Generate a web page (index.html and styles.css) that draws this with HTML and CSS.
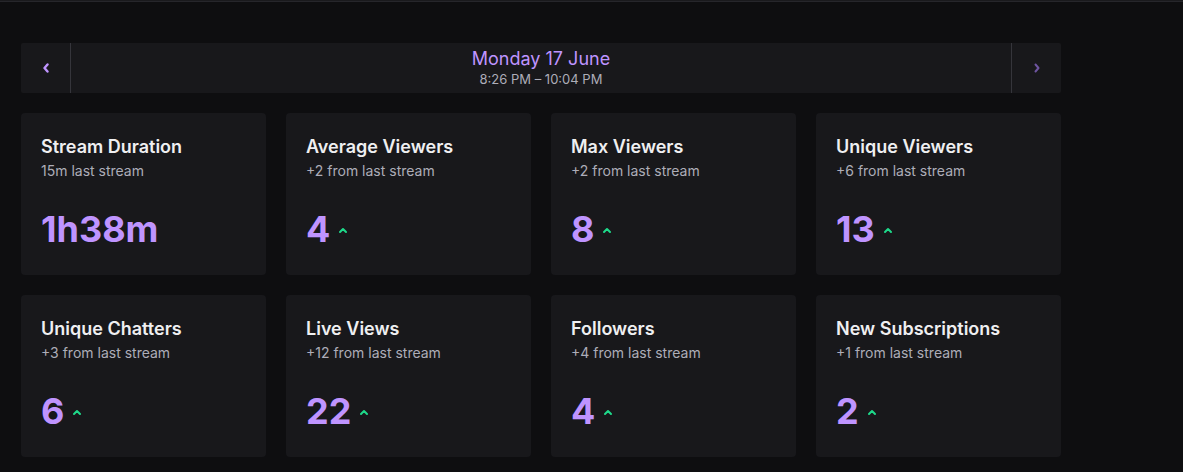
FILE: index.html
```html
<!DOCTYPE html>
<html>
<head>
<meta charset="utf-8">
<link rel="stylesheet" href="styles.css">
</head>
<body>
<div class="topline"></div>
<main class="page">
  <div class="datebar">
    <button class="navbtn navbtn-left" aria-label="Previous">
      <svg width="8" height="10" viewBox="0 0 8 10"><path d="M5.5 1.5 L2.5 5 L5.5 8.5" fill="none" stroke="#bf94ff" stroke-width="2.4" stroke-linecap="round" stroke-linejoin="round"/></svg>
    </button>
    <div class="datecenter">
      <div class="date">Monday 17 June</div>
      <div class="time">8:26 PM – 10:04 PM</div>
    </div>
    <button class="navbtn navbtn-right" aria-label="Next">
      <svg width="8" height="10" viewBox="0 0 8 10"><path d="M2.5 1.5 L5.5 5 L2.5 8.5" fill="none" stroke="#6e55a0" stroke-width="2" stroke-linecap="round" stroke-linejoin="round"/></svg>
    </button>
  </div>

  <div class="grid">
    <div class="card">
      <div class="title">Stream Duration</div>
      <div class="sub">15m last stream</div>
      <div class="value"><span class="num">1h38m</span></div>
    </div>
    <div class="card">
      <div class="title">Average Viewers</div>
      <div class="sub">+2 from last stream</div>
      <div class="value"><span class="num">4</span><svg class="up" width="10" height="7" viewBox="0 0 10 7"><path d="M2 5 L5 2 L8 5" fill="none" stroke="#1ed98a" stroke-width="2" stroke-linecap="round" stroke-linejoin="round"/></svg></div>
    </div>
    <div class="card">
      <div class="title">Max Viewers</div>
      <div class="sub">+2 from last stream</div>
      <div class="value"><span class="num">8</span><svg class="up" width="10" height="7" viewBox="0 0 10 7"><path d="M2 5 L5 2 L8 5" fill="none" stroke="#1ed98a" stroke-width="2" stroke-linecap="round" stroke-linejoin="round"/></svg></div>
    </div>
    <div class="card">
      <div class="title">Unique Viewers</div>
      <div class="sub">+6 from last stream</div>
      <div class="value"><span class="num">13</span><svg class="up" width="10" height="7" viewBox="0 0 10 7"><path d="M2 5 L5 2 L8 5" fill="none" stroke="#1ed98a" stroke-width="2" stroke-linecap="round" stroke-linejoin="round"/></svg></div>
    </div>
    <div class="card">
      <div class="title">Unique Chatters</div>
      <div class="sub">+3 from last stream</div>
      <div class="value"><span class="num">6</span><svg class="up" width="10" height="7" viewBox="0 0 10 7"><path d="M2 5 L5 2 L8 5" fill="none" stroke="#1ed98a" stroke-width="2" stroke-linecap="round" stroke-linejoin="round"/></svg></div>
    </div>
    <div class="card">
      <div class="title">Live Views</div>
      <div class="sub">+12 from last stream</div>
      <div class="value"><span class="num">22</span><svg class="up" width="10" height="7" viewBox="0 0 10 7"><path d="M2 5 L5 2 L8 5" fill="none" stroke="#1ed98a" stroke-width="2" stroke-linecap="round" stroke-linejoin="round"/></svg></div>
    </div>
    <div class="card">
      <div class="title">Followers</div>
      <div class="sub">+4 from last stream</div>
      <div class="value"><span class="num">4</span><svg class="up" width="10" height="7" viewBox="0 0 10 7"><path d="M2 5 L5 2 L8 5" fill="none" stroke="#1ed98a" stroke-width="2" stroke-linecap="round" stroke-linejoin="round"/></svg></div>
    </div>
    <div class="card">
      <div class="title">New Subscriptions</div>
      <div class="sub">+1 from last stream</div>
      <div class="value"><span class="num">2</span><svg class="up" width="10" height="7" viewBox="0 0 10 7"><path d="M2 5 L5 2 L8 5" fill="none" stroke="#1ed98a" stroke-width="2" stroke-linecap="round" stroke-linejoin="round"/></svg></div>
    </div>
  </div>
</main>
</body>
</html>
```

FILE: styles.css
```css
* { box-sizing: border-box; }
html, body {
  margin: 0;
  background: #0e0e10;
  font-family: Inter, "Noto Sans", "Liberation Sans", sans-serif;
  color: #efeff1;
}
.topline {
  height: 2px;
  background: #26262b;
  border-top: 1px solid #1a1a1d;
}
.page {
  width: 1082px;
  padding: 41px 21px 0 21px;
}
.datebar {
  display: flex;
  height: 50px;
  background: #18181b;
  border-radius: 2px;
}
.navbtn {
  width: 50px;
  flex: none;
  background: transparent;
  border: none;
  padding: 0;
  display: flex;
  align-items: center;
  justify-content: center;
}
.navbtn-left { border-right: 1px solid #35353b; }
.navbtn-right { border-left: 1px solid #35353b; }
.datecenter {
  flex: 1;
  display: flex;
  flex-direction: column;
  align-items: center;
  justify-content: center;
}
.date {
  color: #bf94ff;
  font-size: 18px;
  line-height: 22px;
}
.time {
  color: #adadb8;
  font-size: 13px;
  line-height: 18px;
  margin-bottom: 1px;
}
.grid {
  margin-top: 20px;
  display: grid;
  grid-template-columns: repeat(4, 1fr);
  gap: 20px;
}
.card {
  height: 162px;
  background: #18181b;
  border-radius: 4px;
  padding: 22px 20px 0 20px;
}
.title {
  font-size: 18px;
  line-height: 24px;
  font-weight: 600;
  color: #efeff1;
}
.sub {
  margin-top: 2px;
  font-size: 14px;
  line-height: 20px;
  color: #adadb8;
}
.value {
  margin-top: 26px;
  display: flex;
  align-items: center;
  gap: 8px;
  height: 44px;
}
.num {
  font-size: 36px;
  line-height: 44px;
  font-weight: 700;
  color: #bf94ff;
}
.up { margin-top: 3px; }
```
